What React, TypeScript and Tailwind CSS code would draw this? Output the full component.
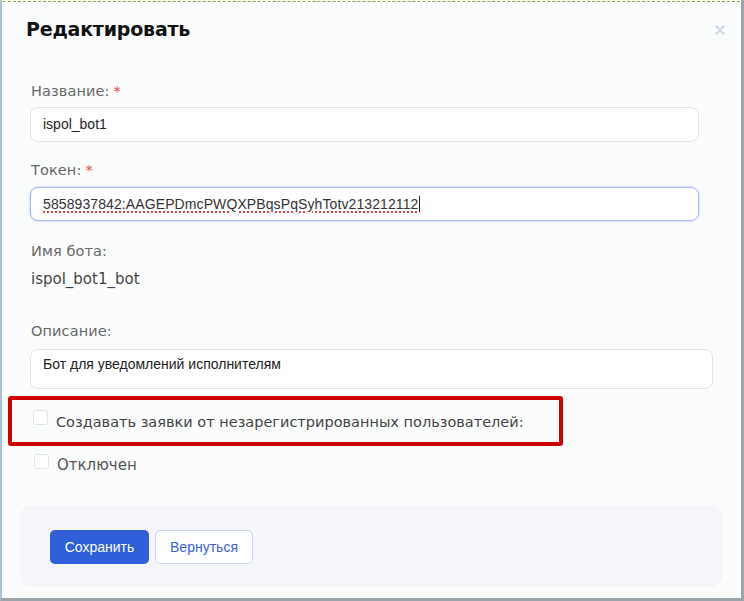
import React from "react";

const labelCls =
  "h-5 leading-5 text-[14.5px] text-[#686868] font-['DejaVu_Sans',sans-serif] tracking-[0.1px]";

function Label({ text, required }: { text: string; required?: boolean }) {
  return (
    <div className={labelCls}>
      {text}
      {required && <span className="ml-1 text-[#e5484d]">*</span>}
    </div>
  );
}

function Checkbox() {
  return (
    <span className="inline-block h-[15px] w-[15px] shrink-0 rounded-[3px] border border-[#dfe3ee] bg-white" />
  );
}

export default function App() {
  return (
    <div className="flex h-[601px] w-[744px] flex-col border-b-[3px] border-l-2 border-r-[3px] border-b-[#9ba5aa] border-l-[#aac0d4] border-r-[#9ba5aa] bg-[#fbfdfd]">
      <div className="mx-px mt-px h-px border-t border-dashed border-[#86ad46]" />

      <div className="mt-[12px] flex h-[30px] items-center justify-between pl-6 pr-[16px]">
        <h1 className="text-[19px] font-bold leading-[30px] text-[#111] font-['DejaVu_Sans',sans-serif] tracking-[-0.2px]">
          Редактировать
        </h1>
        <svg width="10" height="10" viewBox="0 0 10 10" className="mt-[1px]">
          <path d="M1.5 1.5 L8.5 8.5 M8.5 1.5 L1.5 8.5" stroke="#d3dae8" strokeWidth="2.6" strokeLinecap="round" />
        </svg>
      </div>

      <div className="flex flex-col pl-[28px]">
        <div className="mt-[37px] pl-[1px]">
          <Label text="Название:" required />
        </div>
        <div className="mt-[6px] flex h-[35px] w-[669px] items-center rounded-[8px] border border-[#dfe2e8] bg-white pl-[12px] text-[14px] text-[#222] font-['Liberation_Sans',sans-serif]">
          ispol_bot1
        </div>

        <div className="mt-[18px] pl-[1px]">
          <Label text="Токен:" required />
        </div>
        <div className="mt-[7px] flex h-[34px] w-[669px] items-center rounded-[8px] border-[1.5px] border-[#a9baf0] bg-white pl-[12px] text-[14px] text-[#333] shadow-[0_0_2px_1px_#dbe3fb] font-['Liberation_Sans',sans-serif]">
          <span className="tracking-[0.1px] underline decoration-[#e0423f] decoration-dotted decoration-[1.5px] underline-offset-[3px]">
            5858937842:AAGEPDmcPWQXPBqsPqSyhTotv213212112
          </span>
          <span className="ml-px inline-block h-[16px] w-px bg-[#222]" />
        </div>

        <div className="mt-[20px] pl-[1px]">
          <Label text="Имя бота:" />
        </div>
        <div className="mt-[8px] h-5 pl-[1px] leading-5 text-[15px] text-[#444] font-['DejaVu_Sans',sans-serif]">
          ispol_bot1_bot
        </div>

        <div className="mt-[32px] pl-[1px]">
          <Label text="Описание:" />
        </div>
        <div className="mt-[8px] h-[40px] w-[683px] rounded-[8px] border border-[#dfe2e8] bg-white pl-[12px] pt-[5px] text-[14px] leading-[18px] text-[#222] font-['Liberation_Sans',sans-serif]">
          Бот для уведомлений исполнителям
        </div>
      </div>

      <div className="ml-[6px] mt-[7px] flex h-[50px] w-[555px] items-center rounded-[3px] border-4 border-[#cc0000] pl-[21px]">
        <span className="-mt-[4px]">
          <Checkbox />
        </span>
        <span className="ml-[8px] pt-[3px] text-[14.5px] text-[#444] font-['DejaVu_Sans',sans-serif]">
          Создавать заявки от незарегистрированных пользователей:
        </span>
      </div>

      <div className="ml-[32px] mt-[8px] flex h-[20px] items-center">
        <span className="-mt-[3px]">
          <Checkbox />
        </span>
        <span className="ml-[8px] pt-[3px] text-[15px] text-[#555] font-['DejaVu_Sans',sans-serif]">
          Отключен
        </span>
      </div>

      <div className="ml-[18px] mt-[31px] flex h-[82px] w-[703px] items-start gap-[6px] rounded-[12px] bg-[#f5f6fa] pl-[30px] pt-[25px]">
        <button className="h-[34px] w-[99px] rounded-[5px] bg-[#2f5fd9] text-[14px] text-white font-['Liberation_Sans',sans-serif]">
          Сохранить
        </button>
        <button className="h-[34px] w-[98px] rounded-[5px] border border-[#c9d4f1] bg-white text-[14px] text-[#3a63cf] font-['Liberation_Sans',sans-serif]">
          Вернуться
        </button>
      </div>
    </div>
  );
}
